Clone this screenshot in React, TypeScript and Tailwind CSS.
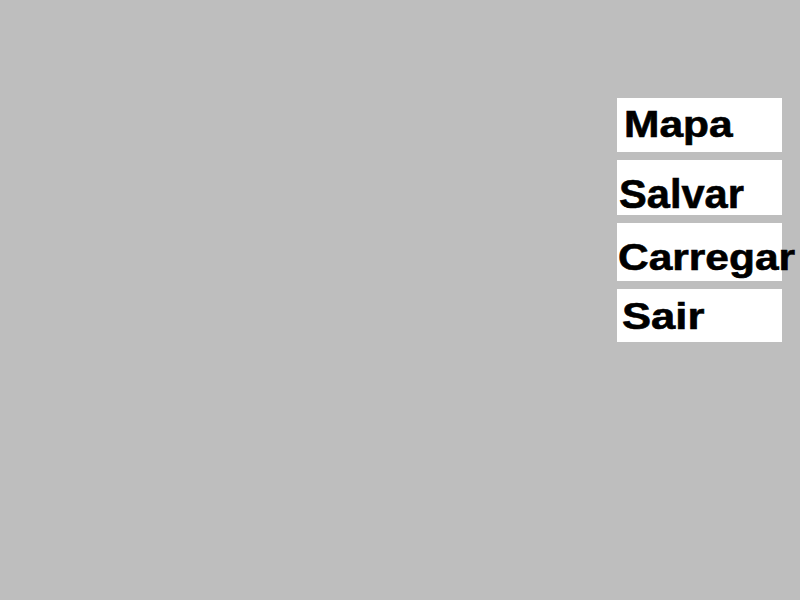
export default function App() {
  return (
    <div className="w-[800px] h-[600px] bg-[#bebebe] overflow-hidden">
      <div className="ml-[617px] pt-[98px] w-[165px] flex flex-col gap-2 font-['Liberation_Sans',Arial,sans-serif] font-bold leading-none text-black [-webkit-text-stroke:0.6px_black]">
        <div className="h-[54px] bg-white pl-[7px] pt-[9px] whitespace-nowrap">
          <span className="inline-block origin-left scale-x-[1.18] text-[36px] leading-none">Mapa</span>
        </div>
        <div className="h-[55px] bg-white pl-[2px] pt-[14px] whitespace-nowrap">
          <span className="inline-block origin-left scale-x-[1.04] text-[40px] leading-none">Salvar</span>
        </div>
        <div className="h-[58px] bg-white pl-[1px] pt-[17px] whitespace-nowrap">
          <span className="inline-block origin-left scale-x-[1.18] text-[36px] leading-none">Carregar</span>
        </div>
        <div className="h-[53px] bg-white pl-[5px] pt-[10px] whitespace-nowrap">
          <span className="inline-block origin-left scale-x-[1.21] text-[36px] leading-none">Sair</span>
        </div>
      </div>
    </div>
  );
}
